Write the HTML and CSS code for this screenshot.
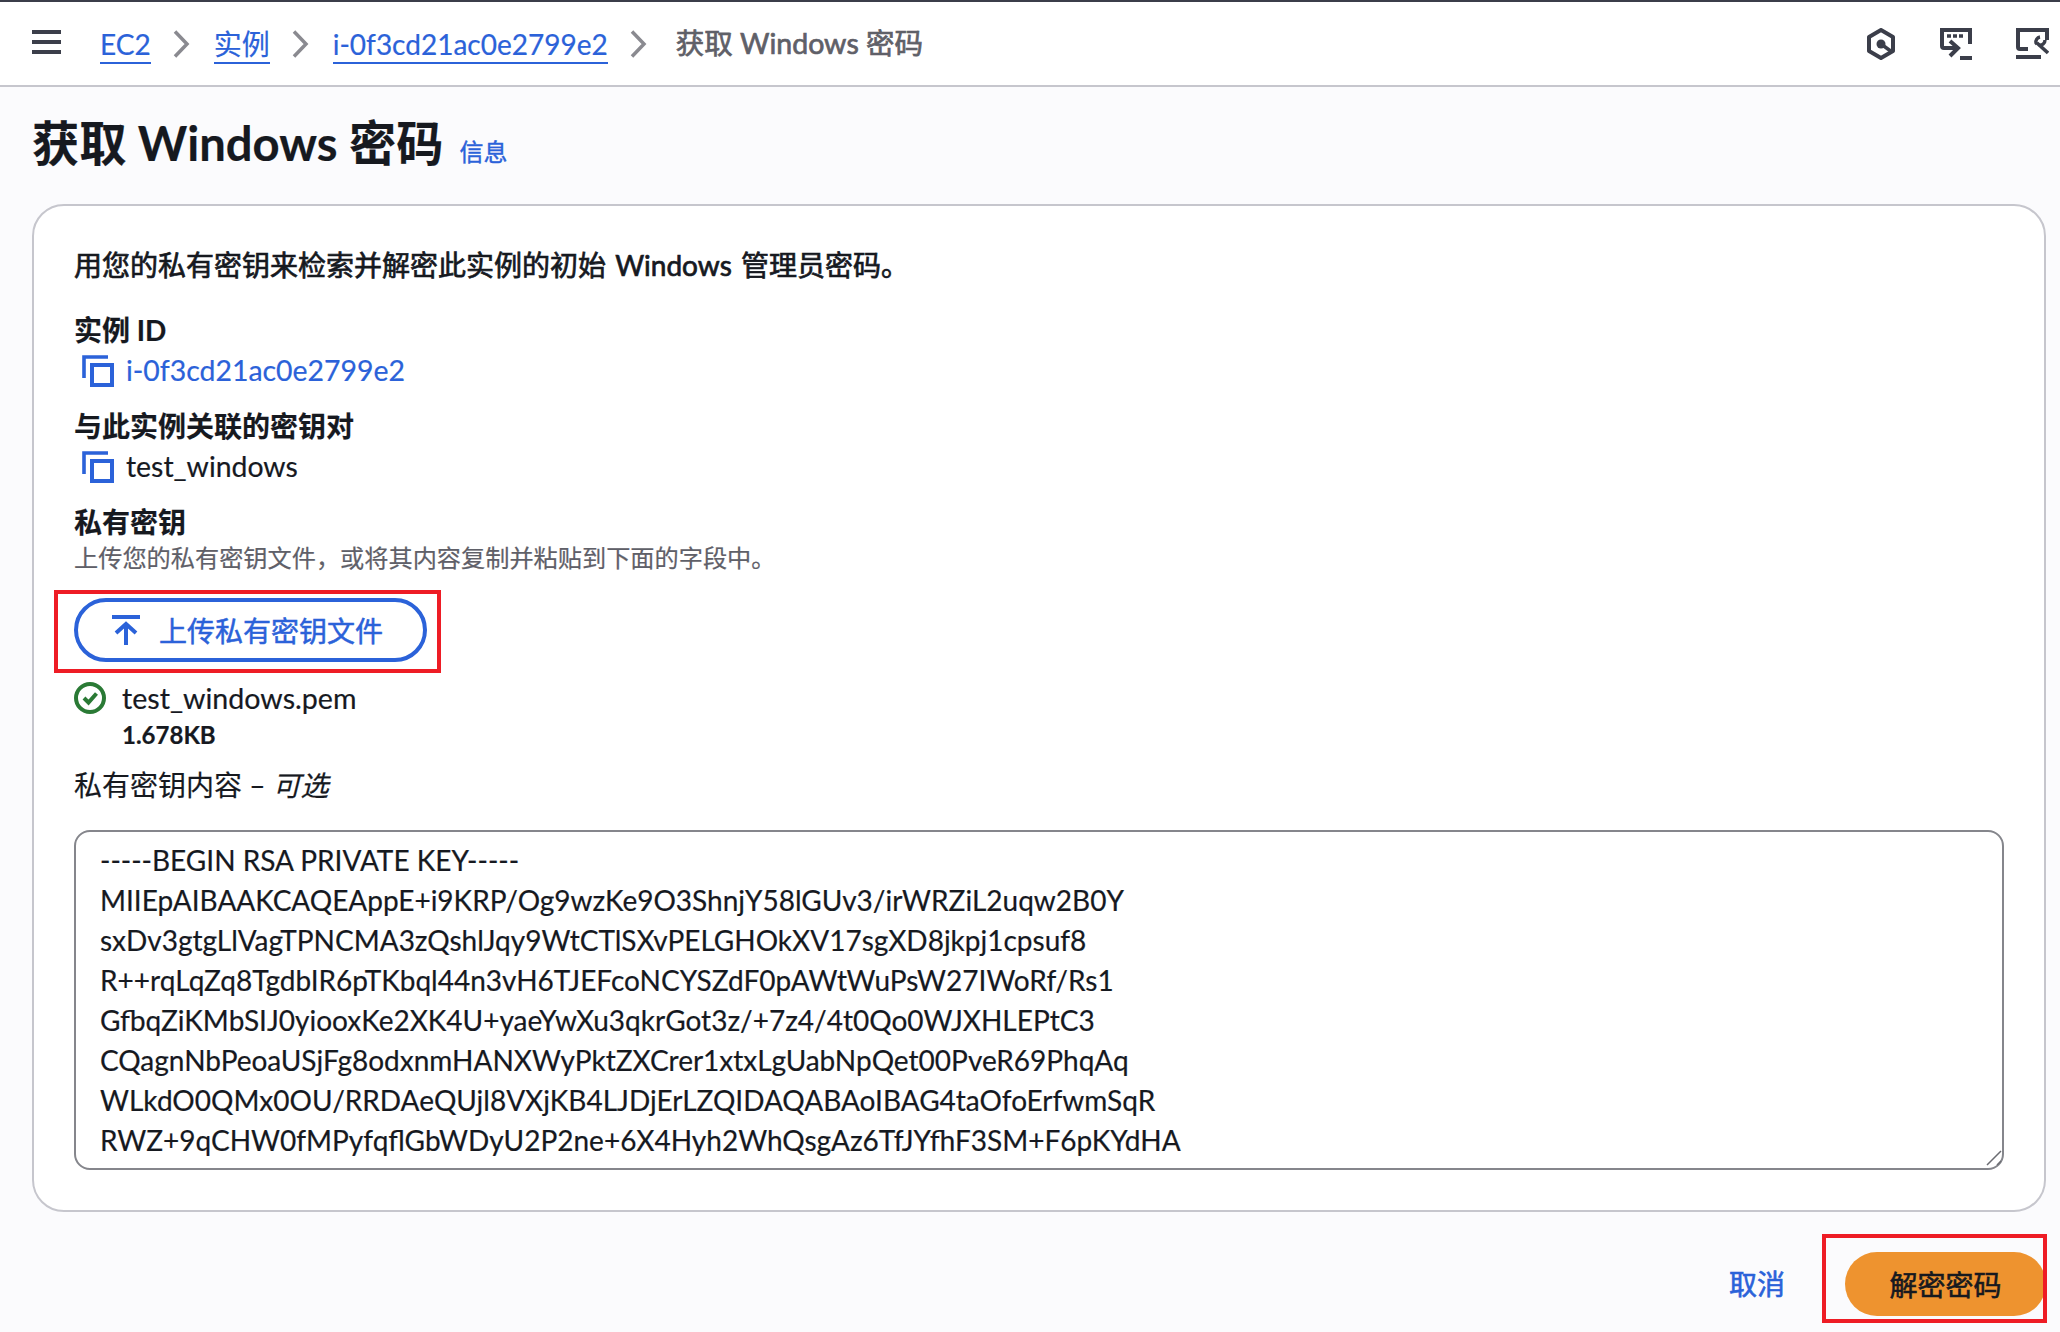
FILE: index.html
```html
<!DOCTYPE html>
<html lang="zh-CN">
<head>
<meta charset="utf-8">
<title>获取 Windows 密码</title>
<link rel="stylesheet" href="styles.css">
</head>
<body>
<header class="topbar">
  <svg class="menu" width="29" height="24" viewBox="0 0 29 24"><path d="M0 2h29M0 12h29M0 22h29" stroke="#3b3e4a" stroke-width="4" fill="none"/></svg>
  <nav class="crumbs">
    <a href="#">EC2</a>
    <svg class="chev" width="18" height="30" viewBox="0 0 18 30"><path d="M2 2.500L14 15 2 27.500" stroke="#8a8a90" stroke-width="3.500" fill="none"/></svg>
    <a href="#">实例</a>
    <svg class="chev" width="18" height="30" viewBox="0 0 18 30"><path d="M2 2.500L14 15 2 27.500" stroke="#8a8a90" stroke-width="3.500" fill="none"/></svg>
    <a href="#">i-0f3cd21ac0e2799e2</a>
    <svg class="chev" width="18" height="30" viewBox="0 0 18 30"><path d="M2 2.500L14 15 2 27.500" stroke="#8a8a90" stroke-width="3.500" fill="none"/></svg>
    <span class="current">获取 Windows 密码</span>
  </nav>
  <div class="tools">
    <svg width="31" height="32" viewBox="0 0 31 32"><path d="M16 2l12 7v14l-12 7-12-7V9z" fill="none" stroke="#3b3e4a" stroke-width="4" stroke-linejoin="round"/><circle cx="16" cy="16" r="4.500" fill="#3b3e4a"/><path d="M16 16l11 8" stroke="#3b3e4a" stroke-width="3.500"/></svg>
    <svg width="32" height="32" viewBox="0 0 32 32"><path d="M30 16V2H2v16a2 2 0 0 0 2 2h14" fill="none" stroke="#3b3e4a" stroke-width="4"/><path d="M7 8h4M13 8h4M19 8h4" stroke="#3b3e4a" stroke-width="3.500"/><path d="M10 13l8 7-8 8" fill="none" stroke="#3b3e4a" stroke-width="4"/><path d="M20 30h12" stroke="#3b3e4a" stroke-width="4"/></svg>
    <svg width="33" height="32" viewBox="0 0 33 32"><path d="M12 21H4a2 2 0 0 1-2-2V2h29v10" fill="none" stroke="#3b3e4a" stroke-width="4"/><path d="M0 29h25" stroke="#3b3e4a" stroke-width="4"/><path d="M21 15l11 10" stroke="#3b3e4a" stroke-width="3.600"/><path d="M24 9a5 5 0 0 0-4 6l1 1M29 12a5 5 0 0 1-6 5" fill="none" stroke="#3b3e4a" stroke-width="3.400"/></svg>
  </div>
</header>
<main class="page">
  <div class="title-row">
    <h1>获取 Windows 密码</h1>
    <a class="info" href="#">信息</a>
  </div>
  <section class="card">
    <p class="lead">用您的私有密钥来检索并解密此实例的初始 Windows 管理员密码。</p>
    <div class="field">
      <div class="label">实例 ID</div>
      <div class="copy-row">
        <svg class="copy" width="32" height="32" viewBox="0 0 32 32"><path d="M2 23V2h24" fill="none" stroke="#2b62d9" stroke-width="3.600"/><path d="M10 10h20v20H10z" fill="none" stroke="#2b62d9" stroke-width="4"/></svg>
        <a class="value-link" href="#">i-0f3cd21ac0e2799e2</a>
      </div>
    </div>
    <div class="field">
      <div class="label">与此实例关联的密钥对</div>
      <div class="copy-row">
        <svg class="copy" width="32" height="32" viewBox="0 0 32 32"><path d="M2 23V2h24" fill="none" stroke="#2b62d9" stroke-width="3.600"/><path d="M10 10h20v20H10z" fill="none" stroke="#2b62d9" stroke-width="4"/></svg>
        <span>test_windows</span>
      </div>
    </div>
    <div class="field key-field">
      <div class="label">私有密钥</div>
      <div class="hint">上传您的私有密钥文件，或将其内容复制并粘贴到下面的字段中。</div>
      <div class="upload-wrap">
        <button class="upload" type="button">
          <svg width="28" height="30" viewBox="0 0 28 30"><path d="M0 2h28M14 30V10M4 18l10-9 10 9" fill="none" stroke="#2b62d9" stroke-width="4"/></svg>
          上传私有密钥文件
        </button>
        <span class="redbox"></span>
      </div>
      <div class="file-row">
        <svg width="32" height="32" viewBox="0 0 32 32"><circle cx="16" cy="16" r="14" fill="none" stroke="#2a7a35" stroke-width="4"/><path d="M10 16l4.500 4.500L22.500 11.500" fill="none" stroke="#2a7a35" stroke-width="4"/></svg>
        <div>
          <div class="file-name">test_windows.pem</div>
          <div class="file-size">1.678KB</div>
        </div>
      </div>
    </div>
    <div class="content-label">私有密钥内容 – <em>可选</em></div>
    <div class="key-wrap">
      <textarea class="key" readonly spellcheck="false">-----BEGIN RSA PRIVATE KEY-----
MIIEpAIBAAKCAQEAppE+i9KRP/Og9wzKe9O3ShnjY58lGUv3/irWRZiL2uqw2B0Y
sxDv3gtgLlVagTPNCMA3zQshlJqy9WtCTlSXvPELGHOkXV17sgXD8jkpj1cpsuf8
R++rqLqZq8TgdbIR6pTKbql44n3vH6TJEFcoNCYSZdF0pAWtWuPsW27IWoRf/Rs1
GfbqZiKMbSIJ0yiooxKe2XK4U+yaeYwXu3qkrGot3z/+7z4/4t0Qo0WJXHLEPtC3
CQagnNbPeoaUSjFg8odxnmHANXWyPktZXCrer1xtxLgUabNpQet00PveR69PhqAq
WLkdO0QMx0OU/RRDAeQUjl8VXjKB4LJDjErLZQIDAQABAoIBAG4taOfoErfwmSqR
RWZ+9qCHW0fMPyfqflGbWDyU2P2ne+6X4Hyh2WhQsgAz6TfJYfhF3SM+F6pKYdHA
</textarea>
      <svg class="grip" width="16" height="16" viewBox="0 0 16 16"><path d="M1 15L15 1M11 15l4-4" stroke="#6b6c72" stroke-width="1.500" fill="none"/></svg>
    </div>
  </section>
  <footer class="actions">
    <a class="cancel" href="#">取消</a>
    <div class="primary-wrap">
      <button class="primary" type="button">解密密码</button>
      <span class="redbox"></span>
    </div>
  </footer>
</main>
</body>
</html>
```
FILE: styles.css
```css
* { box-sizing: border-box; }
html, body { margin: 0; height: 100%; overflow: hidden; }
body {
  background: #fbfbfd;
  color: #16191f;
  font-family: Lato, "Noto Sans CJK SC", sans-serif;
  font-size: 28px;
  line-height: 40px;
  -webkit-text-stroke: 0.2px;
}
a { color: #2b62d9; }
.topbar {
  height: 87px;
  background: #fff;
  border-top: 2px solid #3b3e4a;
  border-bottom: 2px solid #c6c6cd;
  display: flex;
  align-items: center;
  padding: 0 11px 0 32px;
}
.menu { margin-top: -4px; }
.crumbs {
  display: flex;
  align-items: center;
  margin-left: 39px;
  gap: 22.500px;
}
.crumbs a {
  text-decoration: none;
  border-bottom: 2px solid #2b62d9;
  line-height: 36px;
  margin-top: 2px;
}
.crumbs .current { color: #5f6068; font-size: 28.5px; margin: -2px 0 0 5px; -webkit-text-stroke: 0.7px; }
.tools { margin-left: auto; display: flex; align-items: center; gap: 44px; }
.page { padding: 0 14px 0 32px; }
.title-row { display: flex; align-items: baseline; gap: 16px; height: 117px; padding-top: 26px; }
h1 { margin: 0; font-size: 47.200px; line-height: 60px; font-weight: 700; }
.info { font-size: 24px; text-decoration: none; -webkit-text-stroke: 0.4px; }
.card {
  height: 1008px;
  background: #fff;
  border: 2px solid #c6c6cd;
  border-radius: 32px;
  padding: 39px 40px 0;
}
.lead { margin: 0 0 25px; word-spacing: 2px; -webkit-text-stroke: 0.7px; }
.field { margin-bottom: 16px; }
.label { font-weight: 700; line-height: 40px; }
.copy-row { display: flex; align-items: center; gap: 12px; padding-left: 8px; font-size: 28.4px; }
.copy { margin-top: 2px; }
.value-link { text-decoration: none; }
.hint { color: #5f6068; font-size: 24.2px; line-height: 32px; }
.key-field { margin-bottom: 0; }
.upload-wrap { position: relative; display: inline-block; margin-top: 24px; vertical-align: top; }
.upload {
  display: flex;
  align-items: center;
  gap: 19px;
  width: 353px;
  height: 64px;
  padding: 0 0 0 34px;
  background: #fff;
  border: 4px solid #2b62d9;
  border-radius: 32px;
  color: #2b62d9;
  font: 400 28px Lato, "Noto Sans CJK SC", sans-serif;
  -webkit-text-stroke: 0.5px;
}
.redbox {
  position: absolute;
  border: 4px solid #ee1c25;
  pointer-events: none;
}
.upload-wrap .redbox { left: -20px; top: -8px; width: 387px; height: 83px; }
.file-row { display: flex; gap: 16px; margin-top: 16px; }
.file-row svg { margin-top: 4px; flex: none; }
.file-name { font-size: 28.6px; }
.file-size { font-size: 24px; font-weight: 700; line-height: 32px; margin-top: 1px; }
.content-label { margin-top: 14px; }
.content-label em { font-style: italic; }
.key-wrap { position: relative; margin-top: 25px; }
.key {
  display: block;
  width: 100%;
  height: 340px;
  padding: 8px 24px;
  border: 2px solid #85868c;
  border-radius: 16px;
  background: #fff;
  color: #16191f;
  font: 400 28px/40px Lato, "Noto Sans CJK SC", sans-serif;
  overflow: hidden;
  resize: none;
  white-space: pre;
  outline: none;
}
.grip { position: absolute; right: 2px; bottom: 4px; }
.actions { display: flex; justify-content: flex-end; align-items: center; gap: 60px; margin-top: 40px; }
.cancel { text-decoration: none; -webkit-text-stroke: 0.6px; }
.primary-wrap { position: relative; }
.primary {
  display: block;
  width: 201px;
  height: 64px;
  border: none;
  border-radius: 32px;
  background: #ee932f;
  color: #16191f;
  font: 400 28px Lato, "Noto Sans CJK SC", sans-serif;
  -webkit-text-stroke: 0.6px;
}
.primary-wrap .redbox { left: -23px; top: -18px; width: 225px; height: 89px; }
```
